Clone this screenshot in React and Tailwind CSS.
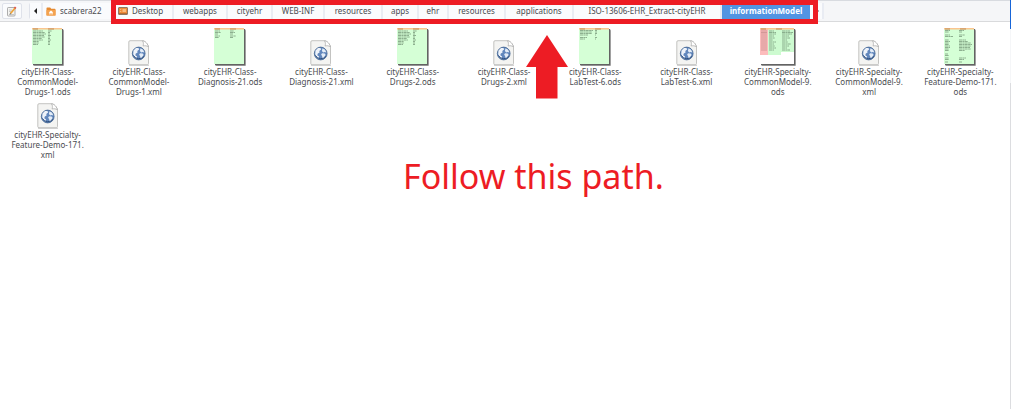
import React from "react";

const crumbs = [
  { label: "webapps", width: "w-[54px]" },
  { label: "cityehr", width: "w-[45px]" },
  { label: "WEB-INF", width: "w-[52px]" },
  { label: "resources", width: "w-[58px]" },
  { label: "apps", width: "w-[36px]" },
  { label: "ehr", width: "w-[30px]" },
  { label: "resources", width: "w-[57px]" },
  { label: "applications", width: "w-[68px]" },
  { label: "ISO-13606-EHR_Extract-cityEHR", width: "w-[148px]" },
];

const files = [
  { lines: ["cityEHR-Class-", "CommonModel-", "Drugs-1.ods"], sheet: "drugs" },
  { lines: ["cityEHR-Class-", "CommonModel-", "Drugs-1.xml"] },
  { lines: ["cityEHR-Class-", "Diagnosis-21.ods"], sheet: "diagnosis" },
  { lines: ["cityEHR-Class-", "Diagnosis-21.xml"] },
  { lines: ["cityEHR-Class-", "Drugs-2.ods"], sheet: "drugs" },
  { lines: ["cityEHR-Class-", "Drugs-2.xml"] },
  { lines: ["cityEHR-Class-", "LabTest-6.ods"], sheet: "lab" },
  { lines: ["cityEHR-Class-", "LabTest-6.xml"] },
  { lines: ["cityEHR-Specialty-", "CommonModel-9.", "ods"], sheet: "common" },
  { lines: ["cityEHR-Specialty-", "CommonModel-9.", "xml"] },
  { lines: ["cityEHR-Specialty-", "Feature-Demo-171.", "ods"], sheet: "feature" },
  { lines: ["cityEHR-Specialty-", "Feature-Demo-171.", "xml"] },
];

// Each row: y, first column start and length, second column start and length.
const sheetRows = {
  drugs: [
    [3, 1, 10, 16, 4], [4.5, 1, 12, 16, 2], [6, 1, 13, 16, 2], [7.5, 1, 11, 16, 3],
    [9, 1, 12, 16, 2], [10.5, 1, 9, 16, 2], [12, 1, 10, 16, 3], [13.5, 1, 6, 16, 2],
    [15, 1, 6, 16, 2], [16.5, 1, 5, 16, 2],
  ],
  diagnosis: [
    [3, 1, 5, 16, 4], [4.5, 1, 6, 16, 5], [6, 1, 3, 16, 3], [8, 1, 5, 16, 6], [9.5, 1, 4, 16, 3],
  ],
  lab: [
    [2.5, 1, 13, 16, 2], [4, 1, 12, 16, 2], [5.5, 1, 12, 16, 2], [7, 1, 8, 16, 1], [9.5, 1, 7, 16, 2], [11, 1, 5, 16, 1],
  ],
  common: [
    [3, 9, 5, 22, 8], [4.5, 9, 7, 22, 11], [6, 9, 7, 22, 10], [8, 9, 5, 22, 7],
    [10, 9, 6, 22, 8], [12, 9, 4, 22, 5], [14, 9, 7, 22, 6], [16, 9, 5, 22, 9],
    [18, 9, 6, 22, 7], [20, 9, 7, 22, 5], [22, 9, 5, 22, 8],
  ],
  feature: [
    [2.5, 1, 5, 15, 5], [4, 1, 4, 15, 3], [7, 1, 5, 15, 6], [8.5, 1, 8, 15, 3],
    [12, 1, 4, 15, 7], [13.5, 1, 5, 15, 9], [15, 1, 4, 15, 12], [16.5, 1, 4, 15, 13],
    [18, 1, 5, 15, 12], [19.5, 1, 5, 15, 11], [21, 1, 4, 15, 12], [22.5, 1, 4, 15, 6],
    [26, 1, 3, 15, 0], [27.5, 1, 4, 15, 0], [30, 1, 4, 15, 7], [31.5, 1, 4, 15, 5], [34, 1, 3, 15, 3],
  ],
};

function SheetIcon({ kind }) {
  const wide = kind === "common";
  const width = wide ? 36 : 32;
  return (
    <svg width={width} height="38" viewBox={`0 0 ${width} 38`} aria-hidden="true">
      <rect x="1.500" y="1.500" width={width - 1.5} height="36.500" rx="1" fill="#a0a0a0" />
      <rect x="1" y="1" width={width - 2} height="36.200" fill="#636363" />
      <rect width={width - 2} height="36" fill={wide ? "#fff" : "#d5ffd6"} />
      {wide && (
        <>
          <rect width="8" height="27" fill="#fcbcbc" />
          <rect x="8" width="13" height="27" fill="#cdfbd0" />
          <rect x="21" width="13" height="24" fill="#cdfbd0" />
          {sheetRows.common.map(([y]) => (
            <path key={y} d={`M1 ${y}h6`} stroke="#c28787" strokeWidth="0.7" />
          ))}
        </>
      )}
      <rect width={width - 2} height="1.5" fill="#fbc58f" />
      <path d="M1 1h5M16 1h6" stroke="#b07845" strokeWidth="0.8" />
      {sheetRows[kind].map(([y, a, aw, b, bw]) => (
        <path
          key={y}
          d={`M${a} ${y}h${aw}M${b} ${y}h${bw}`}
          stroke="#567358"
          strokeWidth="0.8"
          strokeDasharray="3 0.4 2 0.3"
          opacity="0.7"
        />
      ))}
    </svg>
  );
}

function XmlIcon() {
  return (
    <svg width="22" height="26" viewBox="0 0 22 26" aria-hidden="true">
      <path d="M1 25.3h20" stroke="#999" strokeWidth="1" opacity="0.5" />
      <path
        d="M2 .7h12.5c2.5 0 6 4 6 6.5V23.500q0 1.200-1.200 1.200H2q-1.200 0-1.200-1.200V2Q.8.700 2 .700Z"
        fill="#f4f4f2"
        stroke="#b5b5b3"
        strokeWidth="0.8"
      />
      <path d="M14.500.8c1.200 1.500 1 3.500.6 5.200 2-.5 4-.3 5.300 1C20 4 17 .8 14.500.8Z" fill="#fff" stroke="#999" strokeWidth="0.6" />
      <circle cx="10.700" cy="13.500" r="6.400" fill="#6187bd" stroke="#365987" strokeWidth="0.7" />
      <path
        d="M5.500 10.500l2.500-2.400 2.500-.1.600 1.600-1.800 1.300.3 1.500-1.800 1-.5 1.800 1.800 1.300-.6 2.200-1.800-1.800-1.500-2.700Z"
        fill="#eef3fa"
      />
      <path d="M12.500 8.300l2.600 1.500 1.300 2.700-1.700-.5-1.500.4-1.300-1.500ZM12 13.200l2.700.2 1 1.500-1.800 2.800-1.500.9-.3-2.600-1-1.200Z" fill="#e3ecf7" />
      <path d="M5.500 15.500a6 6 0 0 0 10.400.4" fill="none" stroke="#2b4b78" strokeWidth="0.9" />
    </svg>
  );
}

function EditIcon() {
  return (
    <svg width="10" height="11" viewBox="0 0 10 11" aria-hidden="true">
      <rect x=".5" y="1.500" width="7.500" height="8.500" rx=".8" fill="#f4f4f2" stroke="#999" strokeWidth=".8" />
      <path d="M2 4h3M2 5.500h2M2 8.500h5" stroke="#aaa" strokeWidth=".6" />
      <path d="M3.500 7.500l4.600-5.500" stroke="#eda33a" strokeWidth="1.800" />
      <path d="M7.700 2.400l1-1.200" stroke="#dc5350" strokeWidth="2" />
      <path d="M2.700 8.500l.3-1.500 1 .9Z" fill="#444" />
    </svg>
  );
}

function HomeFolderIcon() {
  return (
    <svg width="10" height="9" viewBox="0 0 10 9" aria-hidden="true">
      <path d="M.5 1.200Q.5.500 1.200.500h3l1 1.200h3.600q.7 0 .7.700V8q0 .5-.5.5H1Q.5 8.500.5 8Z" fill="#e58a32" />
      <path d="M.5 3h9v5q0 .5-.5.5H1Q.5 8.500.5 8Z" fill="#f4a24e" />
      <path d="M5 3.400L2.700 5.500h.7v2h1.100V6h1v1.500h1.100v-2h.7Z" fill="#fff" />
    </svg>
  );
}

function DesktopIcon() {
  return (
    <svg width="10" height="8" viewBox="0 0 10 8" aria-hidden="true">
      <rect x=".5" y=".5" width="9" height="7" rx=".5" fill="#ef8b38" stroke="#85705e" strokeWidth=".9" />
      <path d="M2 2h1.200v1H2ZM2 4h1.200v1H2ZM4.500 2H8v3H4.500Z" fill="#f9bb80" />
      <path d="M1 6.500h8" stroke="#a76532" strokeWidth=".8" />
    </svg>
  );
}

const crumbClass =
  "flex shrink-0 items-center border-r-2 border-[#e9ecf3] bg-[#fafbfd] whitespace-nowrap";

export default function App() {
  return (
    <div
      className="relative flex min-h-screen bg-white text-[8px] leading-[10px] text-[#4a4c50]"
      style={{ fontFamily: '"Noto Sans", "Open Sans", sans-serif' }}
    >
      <div className="min-w-0 flex-1">
        <header className="flex h-[22px] items-center border-t border-b border-t-[#d8dbe0] border-b-[#d9dadc] bg-[#f5f6f8]">
          <button
            type="button"
            aria-label="Edit location"
            className="ml-[2px] flex h-4 w-5 shrink-0 items-center justify-center rounded-xs border border-[#dfe2ea] bg-[#fafbfd]"
          >
            <EditIcon />
          </button>
          <nav aria-label="Path" className="ml-[7px] flex h-4 items-stretch rounded-xs border-l border-[#dfe2ea]">
            <button type="button" aria-label="Back" className={`${crumbClass} w-[13px] justify-center`}>
              <svg width="3" height="6" viewBox="0 0 3 6" aria-hidden="true">
                <path d="M3 0v6L0 3Z" fill="#222" />
              </svg>
            </button>
            <button type="button" className={`${crumbClass} w-[73px] gap-1 pl-[3px]`}>
              <HomeFolderIcon />
              scabrera22
            </button>
            <button type="button" className={`${crumbClass} w-[58px] gap-1 pl-[2px]`}>
              <DesktopIcon />
              Desktop
            </button>
            {crumbs.map((crumb, index) => (
              <button key={index} type="button" className={`${crumbClass} ${crumb.width} justify-center`}>
                {crumb.label}
              </button>
            ))}
            <button
              type="button"
              aria-current="page"
              className="w-[88px] shrink-0 bg-[#5294e2] font-bold whitespace-nowrap text-white"
            >
              informationModel
            </button>
            <button type="button" aria-label="Forward" className={`${crumbClass} w-[14px] justify-end pr-[3px]`}>
              <svg width="3" height="6" viewBox="0 0 3 6" aria-hidden="true">
                <path d="M0 0v6l3-3Z" fill="#666" />
              </svg>
            </button>
          </nav>
        </header>

        <main className="grid grid-cols-11 gap-y-[6px] pt-[6px] pr-1 pl-[2px]">
          {files.map((file) => (
            <a key={file.lines.join("")} href="#" className="flex flex-col items-center text-center">
              <span className={file.lines[1] === "Feature-Demo-171." && !file.sheet ? "flex items-end" : "flex h-[38px] items-end"}>
                {file.sheet ? <SheetIcon kind={file.sheet} /> : <XmlIcon />}
              </span>
              <span className="mt-px">
                {file.lines.map((line) => (
                  <span key={line} className="block whitespace-nowrap">
                    {line}
                  </span>
                ))}
              </span>
            </a>
          ))}
        </main>
      </div>

      <aside className="flex w-px flex-col">
        <div className="h-[29px] bg-[#1765d8]" />
        <div className="h-[54px] bg-[#f5f6f8]" />
        <div className="flex-1 bg-[#dcdde0]" />
      </aside>

      <div className="pointer-events-none absolute top-0 left-[111px] h-6 w-[707px] border-5 border-[#ed1c24]" />
      <svg
        className="pointer-events-none absolute top-[35px] left-[526px]"
        width="42"
        height="64"
        viewBox="0 0 42 64"
        aria-hidden="true"
      >
        <path d="M21 0L42 32H31.500V63.500H10V32H0Z" fill="#ed1c24" />
      </svg>
      <p className="pointer-events-none absolute top-[152px] left-[403px] text-[34px] leading-[48px] whitespace-nowrap text-[#ed1c24]">
        Follow this path.
      </p>
    </div>
  );
}
